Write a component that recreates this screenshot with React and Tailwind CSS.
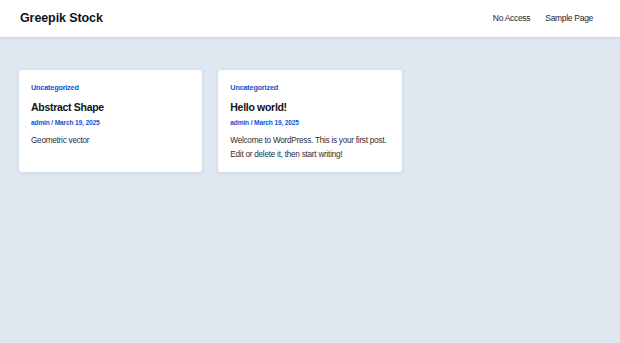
import React from 'react';

const posts = [
  {
    id: 1,
    category: 'Uncategorized',
    title: 'Abstract Shape',
    author: 'admin',
    date: 'March 19, 2025',
    excerpt: 'Geometric vector',
  },
  {
    id: 2,
    category: 'Uncategorized',
    title: 'Hello world!',
    author: 'admin',
    date: 'March 19, 2025',
    excerpt: 'Welcome to WordPress. This is your first post. Edit or delete it, then start writing!',
  },
];

export default function App() {
  return (
    <div className="min-h-screen w-full bg-[#dfe7f1] font-['Liberation_Sans',Arial,sans-serif]">
      <header className="h-[38px] bg-white border-b border-[#d3dbe6] shadow-[0_1px_2px_rgba(0,0,0,0.05)] flex items-center justify-between pl-[20px] pr-[27px]">
        <h1 className="text-[12.5px] font-bold text-[#111318] tracking-[-0.1px]">Greepik Stock</h1>
        <nav className="flex items-center gap-[15px] text-[8.5px] text-[#1e2430] tracking-[-0.3px]">
          <a href="#">No Access</a>
          <a href="#">Sample Page</a>
        </nav>
      </header>

      <main className="px-[19px] pt-[32px] grid grid-cols-3 gap-[16px]">
        {posts.map((post) => (
          <article
            key={post.id}
            className="bg-white rounded-[3px] shadow-[0_1px_4px_rgba(40,60,90,0.12)] pt-[13px] px-[12px] pb-[11px]"
          >
            <p className="text-[7.3px] leading-[10px] font-bold text-[#0b54d4] tracking-[-0.2px]">{post.category}</p>
            <h2 className="mt-[7px] text-[10.5px] leading-[14px] font-bold text-[#111318] tracking-[-0.3px]">{post.title}</h2>
            <p className="mt-[4px] text-[6.6px] leading-[9px] font-bold text-[#0b54d4] tracking-[-0.15px]">
              {post.author} / {post.date}
            </p>
            <p className="mt-[7px] text-[8.2px] leading-[13.5px] text-[#2a2f3a] tracking-[-0.25px]">{post.excerpt}</p>
          </article>
        ))}
      </main>
    </div>
  );
}
